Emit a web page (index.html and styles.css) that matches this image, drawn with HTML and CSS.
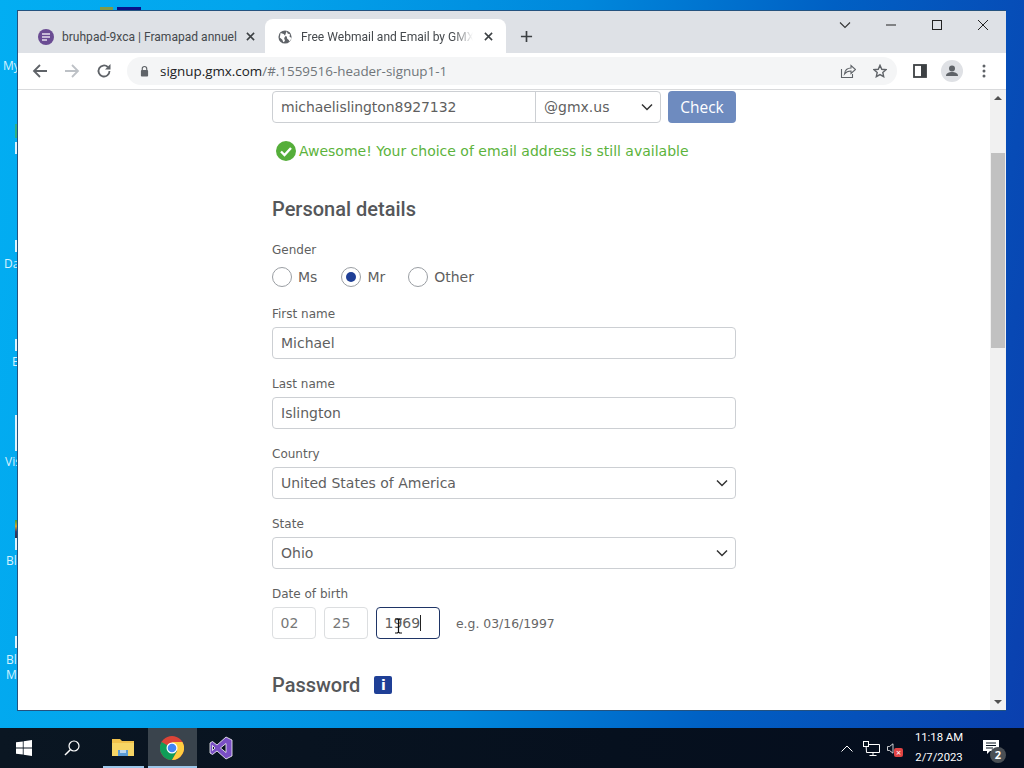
FILE: index.html
```html
<!DOCTYPE html>
<html lang="en">
<head>
<meta charset="utf-8">
<title>Free Webmail and Email by GMX</title>
<link rel="stylesheet" href="styles.css">
</head>
<body>
<div class="desktop">
  <div class="peek peek-a"></div>
  <div class="peek peek-b"></div>
  <div class="dlabel l1">My</div>
  <div class="dlabel l2">Da</div>
  <div class="dlabel l3">E</div>
  <div class="dlabel l4">Vis</div>
  <div class="dlabel l5">Bl</div>
  <div class="dlabel l6">Bl<br>M</div>
  <div class="sliver s1"></div>
  <div class="sliver s2"></div>
  <div class="sliver s3"></div>
  <div class="sliver s4"></div>
  <div class="sliver s5"></div>
  <div class="sliver s6"></div>
  <div class="sliver s7"></div>
  <div class="sliver s8"></div>

  <main class="window">
    <div class="tabstrip">
      <div class="tab">
        <svg class="favicon" viewBox="0 0 16 16"><circle cx="8" cy="8" r="8" fill="#6a4c93"/><path d="M4 5h8M4 8h8M4 11h5" stroke="#e6e0ee" stroke-width="1.6"/></svg>
        <span class="tab-title">bruhpad-9xca | Framapad annuel</span>
        <svg class="tab-x" viewBox="0 0 10 10"><path d="M1 1l8 8M9 1l-8 8" stroke="#3c4043" stroke-width="1.7"/></svg>
      </div>
      <div class="tab tab-active">
        <svg class="favicon" viewBox="0 0 16 16"><circle cx="8" cy="8" r="7.500" fill="#5f6368"/><path d="M3 3.500l3.500 1 2 2.500-1.500 2 1 3.500-2 1.500-1-3-3-2.500zM10 1.500l1 2.500 3 1-1 2 1.500 1.500 1 .5-2 4-1.500-2-1.500-1-.5-2.500-2-1 1-3z" fill="#fff"/></svg>
        <span class="tab-title fade">Free Webmail and Email by GMX</span>
        <svg class="tab-x" viewBox="0 0 10 10"><path d="M1 1l8 8M9 1l-8 8" stroke="#3c4043" stroke-width="1.7"/></svg>
      </div>
      <svg class="newtab" viewBox="0 0 14 14"><path d="M7 1v12M1 7h12" stroke="#3c4043" stroke-width="1.8"/></svg>
      <div class="winctrls">
        <svg class="wc wc-chev" viewBox="0 0 12 12"><path d="M1 3.500l5 5 5-5" fill="none" stroke="#333" stroke-width="1.100"/></svg>
        <svg class="wc wc-min" viewBox="0 0 12 12"><path d="M1 6h10" stroke="#222" stroke-width="1"/></svg>
        <svg class="wc wc-max" viewBox="0 0 12 12"><rect x="1.500" y="1.500" width="9" height="9" fill="none" stroke="#222" stroke-width="1"/></svg>
        <svg class="wc wc-close" viewBox="0 0 12 12"><path d="M1 1l10 10M11 1L1 11" stroke="#222" stroke-width="1"/></svg>
      </div>
    </div>

    <div class="toolbar">
      <svg class="nav nav-back" viewBox="0 0 16 16"><path d="M15 8H2M8 2L2 8l6 6" fill="none" stroke="#5f6368" stroke-width="1.800"/></svg>
      <svg class="nav nav-fwd" viewBox="0 0 16 16"><path d="M1 8h13M8 2l6 6-6 6" fill="none" stroke="#bdc1c6" stroke-width="1.800"/></svg>
      <svg class="nav nav-reload" viewBox="0 0 16 16"><path d="M13.500 8a5.500 5.500 0 1 1-1.700-4" fill="none" stroke="#5f6368" stroke-width="1.800"/><path d="M14.500 1v5.500H9z" fill="#5f6368"/></svg>
      <div class="omnibox">
        <svg class="lock" viewBox="0 0 10 12"><path d="M2.500 5V3.500a2.500 2.500 0 0 1 5 0V5" fill="none" stroke="#5f6368" stroke-width="1.300"/><rect x="1" y="5" width="8" height="7" rx="1" fill="#5f6368"/></svg>
        <span class="url"><b>signup.gmx.com</b>/#.1559516-header-signup1-1</span>
        <svg class="share" viewBox="0 0 16 16"><path d="M1.500 6v8.500h11V11" fill="none" stroke="#5f6368" stroke-width="1.100"/><path d="M4.500 11c.5-4 3-6 6.500-6V2.500L15.500 6.500 11 10.500V8c-3 0-5 1-6.500 3z" fill="none" stroke="#5f6368" stroke-width="1.100"/></svg>
        <svg class="star" viewBox="0 0 16 16"><path d="M8 1.500l2 4.500 4.800.5-3.600 3.200 1 4.800L8 12.100l-4.200 2.400 1-4.800L1.200 6.500 6 6z" fill="none" stroke="#5f6368" stroke-width="1.600"/></svg>
      </div>
      <svg class="panel" viewBox="0 0 14 14"><rect x="1" y="1" width="12" height="12" fill="none" stroke="#3c4043" stroke-width="1.800"/><rect x="8" y="1" width="5" height="12" fill="#3c4043"/></svg>
      <svg class="avatar" viewBox="0 0 22 22"><circle cx="11" cy="11" r="11" fill="#dfe1e5"/><circle cx="11" cy="8.500" r="3" fill="#5f6368"/><path d="M5 16c0-3 3-4 6-4s6 1 6 4z" fill="#5f6368"/></svg>
      <svg class="menu" viewBox="0 0 4 14"><circle cx="2" cy="2" r="1.500" fill="#5f6368"/><circle cx="2" cy="7" r="1.500" fill="#5f6368"/><circle cx="2" cy="12" r="1.500" fill="#5f6368"/></svg>
    </div>

    <div class="viewport">
      <form class="page">
        <div class="email-row">
          <div class="email-group">
            <div class="email-name">michaelislington8927132</div>
            <div class="email-domain"><span>@gmx.us</span>
              <svg class="chev" viewBox="0 0 12 8"><path d="M1 1.500l5 5 5-5" fill="none" stroke="#333" stroke-width="1.500"/></svg>
            </div>
          </div>
          <div class="check-btn">Check</div>
        </div>

        <div class="success">
          <svg class="ok" viewBox="0 0 20 20"><circle cx="10" cy="10" r="10" fill="#55ae3a"/><path d="M5 10.500l3.500 3.500L15 7" fill="none" stroke="#fff" stroke-width="2.400"/></svg>
          <span>Awesome! Your choice of email address is still available</span>
        </div>

        <h2 class="section-title first">Personal details</h2>

        <div class="label gender-label">Gender</div>
        <div class="radios">
          <div class="radio-item"><span class="radio"></span>Ms</div>
          <div class="radio-item"><span class="radio on"></span>Mr</div>
          <div class="radio-item"><span class="radio"></span>Other</div>
        </div>

        <div class="label">First name</div>
        <div class="input">Michael</div>
        <div class="label">Last name</div>
        <div class="input">Islington</div>
        <div class="label">Country</div>
        <div class="input select"><span>United States of America</span>
          <svg class="chev" viewBox="0 0 12 8"><path d="M1 1.500l5 5 5-5" fill="none" stroke="#333" stroke-width="1.500"/></svg>
        </div>
        <div class="label">State</div>
        <div class="input select"><span>Ohio</span>
          <svg class="chev" viewBox="0 0 12 8"><path d="M1 1.500l5 5 5-5" fill="none" stroke="#333" stroke-width="1.500"/></svg>
        </div>
        <div class="label">Date of birth</div>
        <div class="dob">
          <div class="input dob-part">02</div>
          <div class="input dob-part">25</div>
          <div class="input dob-year">1969<i class="caret"></i>
            <svg class="ibeam" viewBox="0 0 9 16"><path d="M1 1h2.500l1 1 1-1H8M4.500 2v12M1 15h2.500l1-1 1 1H8" fill="none" stroke="#111" stroke-width="1.200"/></svg>
          </div>
          <span class="hint">e.g. 03/16/1997</span>
        </div>

        <div class="password-title">
          <h2 class="section-title">Password</h2>
          <span class="info">i</span>
        </div>
      </form>
      <div class="scrollbar">
        <span class="arrow up"></span>
        <div class="track"><div class="thumb"></div></div>
        <span class="arrow down"></span>
      </div>
    </div>
  </main>

  <footer class="taskbar">
    <div class="task task-start">
      <svg viewBox="0 0 16 16" class="winlogo"><path d="M0 2.300l6.800-.9v6.200H0zM7.600 1.300L16 0v7.600H7.600zM0 8.400h6.800v6.200L0 13.700zM7.600 8.400H16V16l-8.400-1.200z" fill="#fff"/></svg>
    </div>
    <div class="task task-search">
      <svg viewBox="0 0 16 16" class="search"><circle cx="10" cy="6" r="5" fill="none" stroke="#fff" stroke-width="1.200"/><path d="M6.300 9.700L1 15" stroke="#fff" stroke-width="1.500"/></svg>
    </div>
    <div class="task task-app running">
      <svg viewBox="0 0 22 20" class="folder"><path d="M0 1h8l2 2h12v15H0z" fill="#f0c14b"/><path d="M0 5h22v13H0z" fill="#f6d565"/><path d="M6 12h10v6H6z" fill="#5b9bd5"/><path d="M8 12h6v3H8z" fill="#bcd6ee"/></svg>
    </div>
    <div class="task task-app running active">
      <svg viewBox="0 0 24 24" class="chrome"><circle cx="12" cy="12" r="12" fill="#db4437"/><path d="M12 12L1.600 6A12 12 0 0 0 12 24l5.200-9z" fill="#0f9d58"/><path d="M12 6h10.400A12 12 0 0 1 12 24l5.200-9z" fill="#ffcd40"/><circle cx="12" cy="12" r="5.500" fill="#fff"/><circle cx="12" cy="12" r="4.300" fill="#4285f4"/></svg>
    </div>
    <div class="task task-app">
      <svg viewBox="0 0 24 24" class="vs"><path d="M17 1l6 3v16l-6 3-9-8-4.500 3.500L1 17V7l2.500-1.500L8 9zM3.500 9.500v5L6 12zM17 7.500L11.500 12l5.500 4.500z" fill="#7a4fc4" stroke="#fff" stroke-width=".8"/></svg>
    </div>
    <div class="tray">
      <svg viewBox="0 0 12 7" class="tray-chev"><path d="M.5 6.500L6 1l5.500 5.500" fill="none" stroke="#fff" stroke-width="1"/></svg>
      <svg viewBox="0 0 17 15" class="tray-net"><path d="M3 3.500h13.500v8h-13zM10 11.500v3M6.500 14.500h7" fill="none" stroke="#fff" stroke-width="1"/><rect x=".5" y=".5" width="5" height="5" fill="#0a1622" stroke="#fff"/></svg>
      <span class="tray-vol">
        <svg viewBox="0 0 8 14" class="tray-spk"><path d="M.5 4.500h2.500L7.500 1v12L3 9.500H.5z" fill="none" stroke="#fff" stroke-width="1"/></svg>
        <span class="mute">×</span>
      </span>
      <div class="clock"><div>11:18 AM</div><div>2/7/2023</div></div>
      <span class="notif">
        <svg viewBox="0 0 16 15" class="notif-icon"><path d="M0 0h16v11H7l-3 3v-3H0z" fill="#fff"/><path d="M3 3h10M3 5.500h10M3 8h7" stroke="#0a1622" stroke-width="1"/></svg>
        <span class="badge">2</span>
      </span>
    </div>
  </footer>
</div>
</body>
</html>
```
FILE: styles.css
```css
* { box-sizing: border-box; }
html, body { margin: 0; padding: 0; }
body { width: 1024px; height: 768px; overflow: hidden; }

.desktop {
  position: relative;
  width: 1024px;
  height: 768px;
  overflow: hidden;
  background: linear-gradient(100deg, #02aef2 0%, #03a4ec 22%, #0088dc 50%, #0060c4 72%, #0b3fae 100%);
  font-family: "Open Sans", sans-serif;
}

.peek { position: absolute; top: 7px; height: 4px; }
.peek-a { left: 100px; width: 13px; background: #7f9a4a; }
.peek-b { left: 117px; width: 24px; background: #08128a; }

.dlabel { position: absolute; color: #d6f2ff; font-size: 12px; line-height: 15px; white-space: nowrap; }
.l1 { left: 3px; top: 58px; }
.l2 { left: 4px; top: 256px; }
.l3 { left: 12px; top: 354px; }
.l4 { left: 5px; top: 454px; }
.l5 { left: 6px; top: 553px; }
.l6 { left: 6px; top: 652px; }
.sliver { position: absolute; left: 15px; width: 3px; background: #dff3fb; }
.s1 { top: 142px; height: 12px; }
.s2 { top: 240px; height: 12px; }
.s3 { top: 339px; height: 12px; }
.s4 { top: 415px; height: 36px; }
.s5 { top: 538px; height: 12px; }
.s6 { top: 636px; height: 12px; }
.s7 { top: 520px; height: 18px; background: linear-gradient(#3f9a3a, #d8a62a 35%, #3a3a6a 65%, #334); }
.s8 { top: 124px; height: 14px; background: #30b080; }

.window {
  position: absolute;
  left: 17px;
  top: 10px;
  width: 989px;
  height: 701px;
  background: #fff;
  border: 1px solid #24527f;
  border-right: 0;
  display: flex;
  flex-direction: column;
}

.tabstrip { height: 42px; background: #dee1e6; display: flex; align-items: flex-end; padding-left: 10px; position: relative; flex: none; }
.tab { width: 237px; height: 34px; display: flex; align-items: center; padding: 1px 0 0 10px; font: 12.050px Roboto, sans-serif; color: #45494d; flex: none; }
.tab-active { background: #fff; border-radius: 8px 8px 0 0; width: 241px; padding-left: 13px; }
.favicon { width: 16px; height: 16px; flex: none; margin-right: 8px; }
.tab-active .favicon { width: 14px; height: 14px; margin-right: 9px; }
.tab-title { white-space: nowrap; width: 176px; flex: none; }
.tab-active .tab-title { width: 172px; }
.fade { -webkit-mask-image: linear-gradient(90deg, #000 88%, transparent 100%); mask-image: linear-gradient(90deg, #000 88%, transparent 100%); }
.tab-x { width: 9px; height: 9px; margin-left: 8px; flex: none; }
.tab-active .tab-x { margin-left: 11px; }
.newtab { width: 13px; height: 13px; margin: 0 0 10px 14px; flex: none; }
.winctrls { position: absolute; right: 0; top: 0; left: 0; display: flex; height: 30px; pointer-events: none; }
.wc { position: absolute; top: 8px; width: 12px; height: 12px; }
.wc-chev { left: 821px; }
.wc-min { left: 867px; }
.wc-max { left: 913px; }
.wc-close { left: 959px; }

.toolbar { height: 37px; background: #fff; border-bottom: 1px solid #d9dadc; display: flex; align-items: center; flex: none; padding-left: 14px; position: relative; }
.nav { width: 16px; height: 16px; flex: none; margin-right: 16px; }
.nav-reload { margin-right: 15px; }
.omnibox { width: 770px; height: 28px; border-radius: 14px; background: #f4f5f6; display: flex; align-items: center; padding-left: 13px; flex: none; }
.lock { width: 9px; height: 12px; flex: none; }
.url { font-size: 13.400px; color: #70757a; margin-left: 11px; white-space: nowrap; width: 677px; flex: none; }
.url b { font-weight: 400; color: #202124; }
.share { width: 16px; height: 16px; flex: none; margin-left: 3px; }
.star { width: 14px; height: 14px; flex: none; margin-left: 17px; }
.panel { width: 14px; height: 14px; flex: none; margin-left: 16px; }
.avatar { width: 22px; height: 22px; flex: none; margin-left: 14px; }
.menu { width: 4px; height: 14px; flex: none; margin-left: 19px; }

.viewport { flex: 1; display: flex; min-height: 0; }
.page { flex: 1; padding: 1px 0 0 254px; font-family: "DejaVu Sans", sans-serif; color: #5f5f5f; overflow: hidden; }

.email-row { display: flex; width: 464px; height: 32px; }
.email-group { display: flex; width: 389px; height: 32px; border: 1px solid #cccfd3; border-radius: 4px; }
.email-name { width: 263px; border-right: 1px solid #cccfd3; padding-left: 8px; font-size: 14px; letter-spacing: -.08px; line-height: 30px; white-space: nowrap; }
.email-domain { flex: 1; display: flex; justify-content: space-between; align-items: center; padding: 0 7px 0 8px; font-size: 14px; }
.check-btn { margin-left: 7px; width: 68px; background: #6e8bbf; color: #fff; border-radius: 4px; text-align: center; font-size: 15.500px; line-height: 32px; font-family: "Open Sans", sans-serif; }
.chev { width: 12px; height: 8px; flex: none; }

.success { display: flex; align-items: center; margin: 18px 0 0 4px; color: #5cb33c; font-size: 14px; line-height: 20px; }
.ok { width: 20px; height: 20px; margin-right: 3px; flex: none; }

.section-title { margin: 0; font: 500 20px/24px Roboto, sans-serif; color: #55575a; }
.first { margin-top: 36px; }

.label { font-size: 12px; line-height: 14px; margin: 18px 0 6px; color: #5f5f5f; }
.gender-label { margin: 22px 0 10px; }
.radios + .label { margin-top: 20px; }

.radios { display: flex; align-items: center; height: 20px; font-size: 14px; }
.radio-item { display: flex; align-items: center; margin-right: 23px; }
.radio-item:first-child { margin-right: 24px; }
.radio { width: 20px; height: 20px; border: 1px solid #9a9ea3; border-radius: 50%; margin-right: 6px; position: relative; flex: none; }
.radio.on::after { content: ""; position: absolute; left: 4px; top: 4px; width: 10px; height: 10px; border-radius: 50%; background: #1f3f96; }

.input { width: 464px; height: 32px; border: 1px solid #cccfd3; border-radius: 4px; padding-left: 8px; font-size: 14px; line-height: 30px; color: #5f5f5f; }
.select { display: flex; justify-content: space-between; align-items: center; padding-right: 7px; }

.dob { display: flex; align-items: center; }
.dob-part { width: 44px; margin-right: 8px; padding-left: 7.500px; border-color: #dcdee0; color: #777; }
.dob-year { width: 64px; padding-left: 7.500px; border-color: #1f3566; position: relative; }
.caret { display: inline-block; width: 1px; height: 16px; background: #222; vertical-align: -3px; }
.ibeam { position: absolute; left: 17px; top: 10px; width: 9px; height: 16px; }
.hint { margin-left: 16px; font-size: 12.400px; color: #666; }

.password-title { display: flex; align-items: center; margin-top: 34px; }
.info { width: 18px; height: 18px; margin-left: 14px; background: #1f3f96; border-radius: 2px; color: #fff; font: 700 14px/18px "DejaVu Sans", sans-serif; text-align: center; }

.scrollbar { width: 16px; flex: none; background: #f1f1f1; display: flex; flex-direction: column; align-items: center; }
.arrow { width: 0; height: 0; border-left: 4px solid transparent; border-right: 4px solid transparent; flex: none; }
.arrow.up { border-bottom: 4px solid #505050; margin: 6px 0; }
.arrow.down { border-top: 4px solid #505050; margin: 6px 0; }
.track { flex: 1; width: 100%; padding: 47px 0 0 0; }
.thumb { height: 195px; background: #c1c1c1; margin: 0 1px; }

.taskbar { position: absolute; left: 0; right: 0; bottom: 0; height: 40px; background: linear-gradient(90deg, #0a1622, #06101e 60%, #040d1e); display: flex; align-items: center; color: #fff; }
.task { height: 40px; display: flex; align-items: center; justify-content: center; flex: none; position: relative; }
.task-start { width: 48px; }
.task-search { width: 48px; margin-right: 3px; }
.task-app { width: 49px; padding-right: 1px; }
.running::after { content: ""; position: absolute; left: 4px; right: 4px; bottom: 0; height: 2px; background: #9cc7ea; }
.active { background: #3a444d; }
.active::after { left: 0; right: 0; }
.winlogo { width: 16px; height: 16px; }
.search { width: 16px; height: 16px; }
.folder { width: 22px; height: 20px; }
.chrome { width: 24px; height: 24px; }
.vs { width: 24px; height: 24px; }

.tray { margin-left: auto; display: flex; align-items: center; height: 40px; }
.tray-chev { width: 12px; height: 7px; margin-right: 10px; }
.tray-net { width: 17px; height: 15px; margin-right: 7px; }
.tray-vol { position: relative; width: 17px; height: 16px; display: block; margin-right: 5px; }
.tray-spk { position: absolute; left: 0; top: 3px; width: 6.500px; height: 11px; }
.mute { position: absolute; left: 7px; top: 8px; width: 9px; height: 9px; background: #e04343; border-radius: 2px; font-size: 9px; line-height: 9px; text-align: center; color: #fff; }
.clock { width: 60px; text-align: center; font: 11.300px/20px Roboto, sans-serif; margin-right: 14px; }
.notif { position: relative; width: 24px; height: 26px; margin-right: 17px; display: block; }
.notif-icon { position: absolute; left: 0; top: 5px; width: 16px; height: 15px; }
.badge { position: absolute; left: 7px; top: 12px; width: 16px; height: 16px; border-radius: 50%; background: #4a4f55; color: #fff; font-size: 11px; line-height: 16px; text-align: center; font-weight: 700; }
```
